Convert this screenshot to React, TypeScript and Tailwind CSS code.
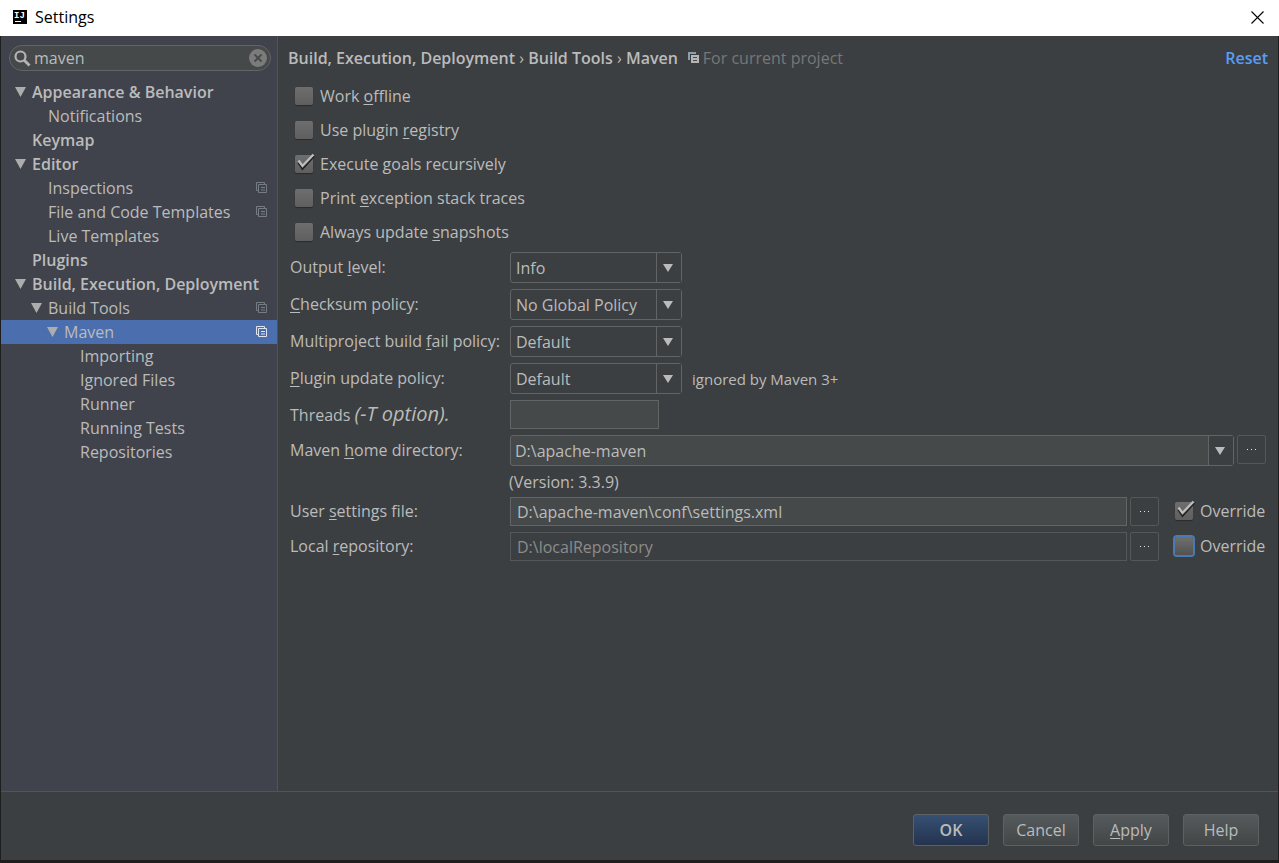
import { useState } from 'react';
import type { ReactNode } from 'react';

const INDENT = ['pl-[14px]', 'pl-[30px]', 'pl-[46px]', 'pl-[62px]'];

type TreeItem = {
  label: string;
  depth: number;
  group?: boolean;
  bold?: boolean;
  perProject?: boolean;
};

const TREE: TreeItem[] = [
  { label: 'Appearance & Behavior', depth: 0, group: true, bold: true },
  { label: 'Notifications', depth: 1 },
  { label: 'Keymap', depth: 0, bold: true },
  { label: 'Editor', depth: 0, group: true, bold: true },
  { label: 'Inspections', depth: 1, perProject: true },
  { label: 'File and Code Templates', depth: 1, perProject: true },
  { label: 'Live Templates', depth: 1 },
  { label: 'Plugins', depth: 0, bold: true },
  { label: 'Build, Execution, Deployment', depth: 0, group: true, bold: true },
  { label: 'Build Tools', depth: 1, group: true, perProject: true },
  { label: 'Maven', depth: 2, group: true, perProject: true },
  { label: 'Importing', depth: 3 },
  { label: 'Ignored Files', depth: 3 },
  { label: 'Runner', depth: 3 },
  { label: 'Running Tests', depth: 3 },
  { label: 'Repositories', depth: 3 },
];

// Text with one underlined mnemonic letter, marked by "_" before it
function Mnemonic({ text }: { text: string }) {
  const i = text.indexOf('_');
  if (i < 0) return <>{text}</>;
  return (
    <>
      {text.slice(0, i)}
      <span className="underline underline-offset-2">{text[i + 1]}</span>
      {text.slice(i + 2)}
    </>
  );
}

function ProjectIcon({ className }: { className: string }) {
  return (
    <svg width="11" height="11" viewBox="0 0 11 11" fill="none" className={className} aria-hidden>
      <path d="M2 8.5H.5v-8h8V2" stroke="currentColor" />
      <path d="M3 2.5h7.5v8h-8V2.5z" stroke="currentColor" />
      <path d="M5 5.5h4M5 8h4" stroke="currentColor" />
    </svg>
  );
}

// Heavier variant used beside the breadcrumb
function ProjectIconSolid() {
  return (
    <svg width="11" height="11" viewBox="0 0 11 11" className="ml-2.5" aria-hidden>
      <path d="M0 0h8v2H2v6H0z" fill="#87a0ac" />
      <path d="M3 3h8v8H3z" fill="#b5b5b5" />
      <path d="M5 5.5h4M5 8.5h4" stroke="#4a4d4f" />
    </svg>
  );
}

function LogoIcon() {
  return (
    <svg width="14" height="14" viewBox="0 0 14 14" aria-hidden>
      <rect width="14" height="14" fill="#000" />
      <text x="1" y="8" fill="#fff" fontSize="9" fontWeight="700" fontFamily="Liberation Mono, monospace">
        IJ
      </text>
      <rect x="2" y="11" width="6" height="1" fill="#fff" />
    </svg>
  );
}

function Checkbox({ label, defaultChecked, focused }: { label: string; defaultChecked?: boolean; focused?: boolean }) {
  const [checked, setChecked] = useState(!!defaultChecked);
  return (
    <label className="flex items-center gap-[7px]">
      <span className="relative flex">
        <input
          type="checkbox"
          checked={checked}
          onChange={(e) => setChecked(e.target.checked)}
          className={`size-[18px] appearance-none rounded-[2px] outline-none ${
            focused
              ? 'bg-linear-to-b from-[#707070] to-[#525252] ring-2 ring-[#4a7bb0]'
              : 'bg-linear-to-b from-[#6e6e6e] to-[#5f5f5f] shadow-[0_1px_1px_#2a2a2a]'
          }`}
        />
        {checked && (
          <svg
            width="20"
            height="20"
            viewBox="0 0 20 20"
            fill="none"
            className="pointer-events-none absolute -top-0.5 left-0"
            aria-hidden
          >
            <path d="M3.5 9.5l4 6L19 3" stroke="#222" strokeWidth="2.4" />
            <path d="M3.5 7.5l4 5.5L18.5 1.5" stroke="#bdbdbd" strokeWidth="2.4" />
          </svg>
        )}
      </span>
      <span>
        <Mnemonic text={label} />
      </span>
    </label>
  );
}

function ArrowBox() {
  return (
    <span className="pointer-events-none absolute inset-y-px right-px flex w-[25px] items-center justify-center border-l border-[#646464] bg-[#3c3f41] pr-0.5">
      <svg width="10" height="8" viewBox="0 0 10 8" aria-hidden>
        <path d="M0 0h10L5 8z" fill="#bbbbbb" />
      </svg>
    </span>
  );
}

function Combo({ id, options }: { id: string; options: string[] }) {
  return (
    <span className="relative flex w-[172px]">
      <select
        id={id}
        className="h-[31px] w-full appearance-none rounded-[3px] border border-[#646464] bg-[#3c3f41] pl-[5px] outline-none"
      >
        {options.map((o) => (
          <option key={o}>{o}</option>
        ))}
      </select>
      <ArrowBox />
    </span>
  );
}

function BrowseButton({ label }: { label: string }) {
  return (
    <button
      type="button"
      aria-label={label}
      className="flex size-[29px] shrink-0 items-center justify-center rounded-[2px] border border-[#555758]"
    >
      <svg width="11" height="1" viewBox="0 0 11 1" aria-hidden>
        <path d="M1 .5h1M5 .5h1M9 .5h1" stroke="#e4e4e4" />
      </svg>
    </button>
  );
}

function Row({ id, label, children }: { id: string; label: ReactNode; children: ReactNode }) {
  return (
    <div className="flex">
      <label htmlFor={id} className="flex w-[220px] shrink-0 items-center pb-px whitespace-pre">
        <span>{label}</span>
      </label>
      {children}
    </div>
  );
}

function DialogButton({ label, primary }: { label: string; primary?: boolean }) {
  return (
    <button
      type="button"
      className={`h-8 w-[76px] rounded-[3px] border border-[#5e6162] bg-linear-to-b ${
        primary ? 'from-[#365073] to-[#24344f] font-semibold' : 'from-[#555a5c] to-[#424647]'
      }`}
    >
      <Mnemonic text={label} />
    </button>
  );
}

export default function App() {
  const [query, setQuery] = useState('maven');
  const [selected, setSelected] = useState('Maven');

  return (
    <div className="flex min-h-screen flex-col border-x border-b-3 border-[#1e1e1f] bg-[#3c3f41] font-['Open_Sans','Noto_Sans',sans-serif] text-base leading-6 text-[#bbbbbb]">
      <header className="-mx-px flex h-9 items-center bg-white pr-[15px] pb-0.5 pl-[13px] text-black">
        <LogoIcon />
        <h1 className="ml-2 flex-1">Settings</h1>
        <button type="button" aria-label="Close">
          <svg width="13" height="13" viewBox="0 0 13 13" aria-hidden>
            <path d="M.5 .5l12 12M12.5 .5l-12 12" stroke="#000" strokeWidth="1.1" />
          </svg>
        </button>
      </header>

      <div className="flex flex-1 border-b border-[#515355]">
        <aside className="w-[277px] shrink-0 border-r border-[#515355] bg-[#40434c] pt-[9px]">
          <div className="mr-1.5 ml-2 flex h-[26px] items-center rounded-full border border-[#646464] bg-[#45494a] pr-[3px] pl-1">
            <svg width="17" height="17" viewBox="0 0 17 17" fill="none" aria-hidden>
              <circle cx="6.5" cy="6.5" r="5" stroke="#b4b4b4" strokeWidth="2.2" />
              <path d="M10 10l5.5 5.5" stroke="#b4b4b4" strokeWidth="2.8" />
            </svg>
            <input
              aria-label="Search settings"
              value={query}
              onChange={(e) => setQuery(e.target.value)}
              className="ml-[3px] min-w-0 flex-1 bg-transparent outline-none"
            />
            <button type="button" aria-label="Clear search" onClick={() => setQuery('')}>
              <svg width="18" height="18" viewBox="0 0 18 18" aria-hidden>
                <circle cx="9" cy="9" r="9" fill="#7b7b7b" />
                <path d="M5.5 5.5l7 7M12.5 5.5l-7 7" stroke="#45494a" strokeWidth="1.8" />
              </svg>
            </button>
          </div>

          <nav className="mt-[9px]">
            {TREE.map((item) => {
              const active = item.label === selected;
              return (
                <button
                  key={item.label}
                  type="button"
                  onClick={() => setSelected(item.label)}
                  className={`flex h-6 w-full items-center pr-2.5 pb-px text-left ${INDENT[item.depth]} ${
                    active ? 'bg-[#4b6eaf]' : ''
                  } ${item.bold ? 'font-semibold' : ''}`}
                >
                  <span className="w-[17px] shrink-0">
                    {item.group && (
                      <svg width="11" height="10" viewBox="0 0 11 10" aria-hidden>
                        <path d="M0 0h11L5.5 10z" fill="#adadad" />
                      </svg>
                    )}
                  </span>
                  <span className="flex-1 whitespace-nowrap">{item.label}</span>
                  {item.perProject && <ProjectIcon className={active ? 'text-[#dfe5ee]' : 'text-[#747b82]'} />}
                </button>
              );
            })}
          </nav>
        </aside>

        <main className="min-w-0 flex-1 pr-3 pl-3">
          <div className="-mr-0.5 -ml-0.5 flex h-[43px] items-center">
            <h2 className="font-semibold">
              Build, Execution, Deployment <span className="font-normal">›</span> Build Tools{' '}
              <span className="font-normal">›</span> Maven
            </h2>
            <ProjectIconSolid />
            <span className="ml-1 flex-1 text-[#777777]">For current project</span>
            <a href="#reset" className="font-semibold text-[#589df6]">
              Reset
            </a>
          </div>

          <div className="ml-[5px] grid auto-rows-[34px]">
            <Checkbox label="Work _offline" />
            <Checkbox label="Use plugin _registry" />
            <Checkbox label="Execute _goals recursively" defaultChecked />
            <Checkbox label="Print _exception stack traces" />
            <Checkbox label="Always update _snapshots" />
          </div>

          <div className="mt-[3px] flex flex-col gap-1.5">
            <Row id="output" label={<Mnemonic text="Output _level:" />}>
              <Combo id="output" options={['Info', 'Debug', 'Warn', 'Error', 'Fatal', 'Disabled']} />
            </Row>
            <Row id="checksum" label={<Mnemonic text="_Checksum policy:" />}>
              <Combo id="checksum" options={['No Global Policy', 'Fail', 'Warn']} />
            </Row>
            <Row id="fail" label={<Mnemonic text="Multiproject build _fail policy:" />}>
              <Combo id="fail" options={['Default', 'Fail Fast', 'Fail At End', 'Never Fail']} />
            </Row>
            <Row id="update" label={<Mnemonic text="_Plugin update policy:" />}>
              <Combo id="update" options={['Default', 'Check for Updates', 'Do Not Update']} />
              <span className="ml-2.5 self-center text-[15px]">ignored by Maven 3+</span>
            </Row>
            <Row
              id="threads"
              label={
                <>
                  Threads <i className="text-xl leading-6">(-T option).</i>
                </>
              }
            >
              <input id="threads" className="h-[29px] w-[149px] border border-[#646464] bg-[#45494a] px-1.5 outline-none" />
            </Row>

            <div>
              <Row id="home" label={<Mnemonic text="Maven _home directory:" />}>
                <span className="relative flex min-w-0 flex-1">
                  <input
                    id="home"
                    defaultValue="D:\apache-maven"
                    className="h-[31px] w-full rounded-[3px] border border-[#646464] bg-[#45494a] pr-7 pl-1 outline-none"
                  />
                  <ArrowBox />
                </span>
                <span className="ml-[3px]">
                  <BrowseButton label="Browse Maven home" />
                </span>
              </Row>
              <p className="ml-[219px] flex h-[31px] items-center">(Version: 3.3.9)</p>
              <Row id="settings" label={<Mnemonic text="User _settings file:" />}>
                <input
                  id="settings"
                  defaultValue="D:\apache-maven\conf\settings.xml"
                  className="mr-[3px] h-[29px] min-w-0 flex-1 border border-[#646464] bg-[#45494a] px-1.5 outline-none"
                />
                <BrowseButton label="Browse settings file" />
                <span className="flex w-[107px] shrink-0 pb-0.5 pl-4">
                  <Checkbox label="Override" defaultChecked />
                </span>
              </Row>
            </div>

            <Row id="repository" label={<Mnemonic text="Local _repository:" />}>
              <input
                id="repository"
                disabled
                defaultValue="D:\localRepository"
                className="mr-[3px] h-[29px] min-w-0 flex-1 border border-[#555758] px-1.5 text-[#8c8c8c] outline-none"
              />
              <BrowseButton label="Browse local repository" />
              <span className="flex w-[107px] shrink-0 pb-0.5 pl-4">
                <Checkbox label="Override" focused />
              </span>
            </Row>
          </div>
        </main>
      </div>

      <footer className="flex h-[68px] items-center justify-end gap-3.5 pt-2 pr-[19px]">
        <DialogButton label="OK" primary />
        <DialogButton label="Cancel" />
        <DialogButton label="_Apply" />
        <DialogButton label="Help" />
      </footer>
    </div>
  );
}
